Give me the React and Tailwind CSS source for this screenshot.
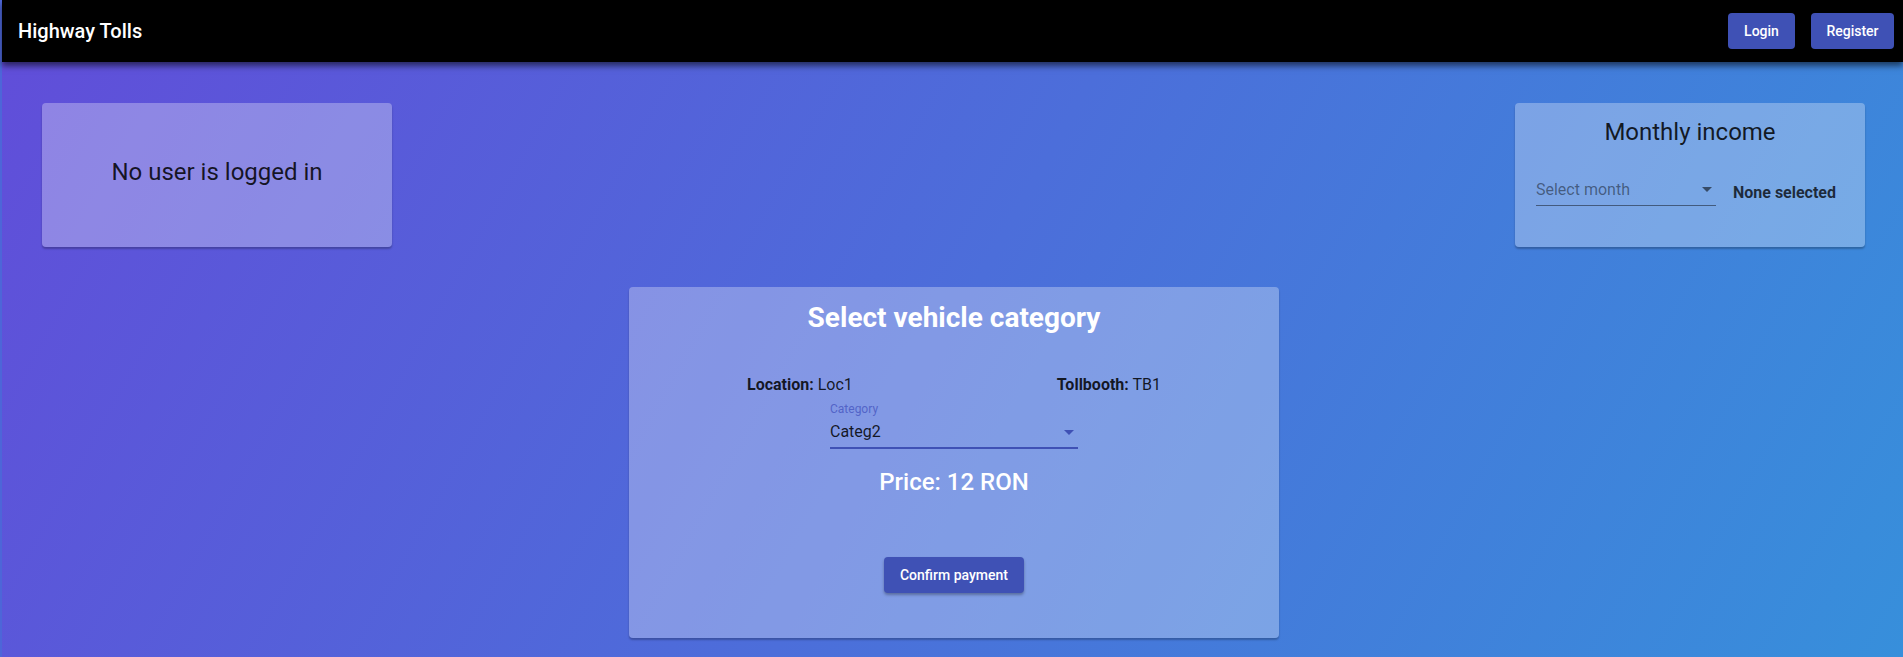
import React from "react";

function DropArrow({className}) {
  return (
    <svg viewBox="0 0 24 24" className={className} fill="currentColor">
      <path d="M7 10l5 5 5-5z"/>
    </svg>
  );
}

function NavBar() {
  return (
    <header className="h-[62px] bg-black flex items-center justify-between pl-4 pr-[9px] shadow-[0_4px_6px_rgba(0,0,0,0.55)] relative z-10">
      <h1 className="text-white text-[20px] font-medium">Highway Tolls</h1>
      <div className="flex gap-4">
        <button className="w-[67px] h-9 rounded bg-[#3f51b5] text-white text-[14px] font-medium">Login</button>
        <button className="w-[83px] h-9 rounded bg-[#3f51b5] text-white text-[14px] font-medium">Register</button>
      </div>
    </header>
  );
}

export default function App() {
  return (
    <div className="min-h-screen bg-[#4d66d8] pl-[2px] font-['Roboto','Liberation_Sans',sans-serif]">
      <div className="min-h-screen bg-[linear-gradient(119deg,#614dd9,#378fdb)]">
        <NavBar/>

        <div className="flex justify-between pl-10 pr-[38px] pt-[41px]">
          {/* user card */}
          <section className="w-[350px] h-[144px] rounded bg-white/30 shadow-[0_2px_2px_rgba(0,0,0,0.25)] flex items-center justify-center pb-[6px]">
            <p className="text-[24px] text-black/85">No user is logged in</p>
          </section>

          {/* monthly income */}
          <section className="w-[350px] h-[144px] rounded bg-white/30 shadow-[0_2px_2px_rgba(0,0,0,0.25)] pt-[13px]">
            <h2 className="text-center text-[24px] leading-8 text-black/85">Monthly income</h2>
            <div className="flex items-end justify-center gap-[17px] mt-[30px] pr-[8px]">
              <div className="w-[180px] h-[28px] border-b border-black/45 flex items-start justify-between">
                <span className="text-[16px] leading-6 text-black/45">Select month</span>
                <DropArrow className="w-6 h-6 -mt-[1px] -mr-[3px] text-black/55"/>
              </div>
              <span className="text-[16px] leading-6 font-bold text-black/75 pb-[1px]">None selected</span>
            </div>
          </section>
        </div>

        {/* vehicle category */}
        <div className="pt-10 pl-[3px] flex justify-center">
          <section className="w-[650px] h-[351px] rounded bg-white/30 shadow-[0_2px_2px_rgba(0,0,0,0.25)] pt-[14px] flex flex-col items-center">
            <h2 className="text-white text-[28px] leading-[34px] font-bold">Select vehicle category</h2>
            <div className="w-full px-4 mt-[38px] flex justify-around text-[16px] leading-6 text-black/85">
              <span><b className="font-bold">Location:</b> Loc1</span>
              <span><b className="font-bold">Tollbooth:</b> TB1</span>
            </div>
            <div className="w-[248px] mt-1">
              <div className="text-[12px] leading-4 text-[#4656c0]/80">Category</div>
              <div className="mt-[3px] pb-[3px] border-b-2 border-[#3f51b5] flex items-center justify-between">
                <span className="text-[16px] leading-6 text-black/85">Categ2</span>
                <DropArrow className="w-6 h-6 text-[#3f51b5] -mr-[3px]"/>
              </div>
            </div>
            <p className="mt-[17px] text-white text-[24px] leading-8 font-medium">Price: 12 RON</p>
            <button className="mt-[59px] px-4 h-9 rounded bg-[#3f51b5] text-white text-[14px] font-medium shadow-[0_2px_3px_rgba(0,0,0,0.3)]">
              Confirm payment
            </button>
          </section>
        </div>
      </div>
    </div>
  );
}
